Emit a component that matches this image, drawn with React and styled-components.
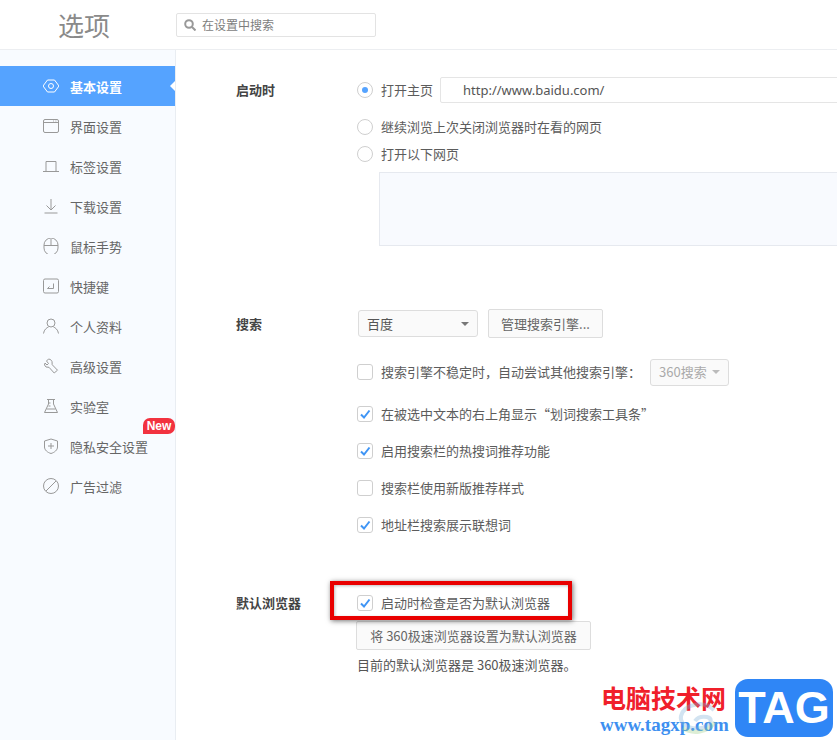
import React from 'react'
import styled, { createGlobalStyle } from 'styled-components'

const GlobalStyle = createGlobalStyle`
  html, body {
    margin: 0;
    height: 100%;
    overflow: hidden;
    background: #fff;
  }
  body {
    font-family: "Noto Sans CJK SC", "Liberation Sans", sans-serif;
    font-size: 13px;
    color: #555;
  }
`

const Page = styled.div`
  position: relative;
  width: 837px;
  height: 740px;
  overflow: hidden;
  display: flex;
  flex-direction: column;
`

const Header = styled.header`
  height: 49px;
  flex: none;
  display: flex;
  align-items: center;
  border-bottom: 1px solid #eceef1;
`

const Title = styled.h1`
  width: 176px;
  margin: 0;
  padding-left: 58px;
  box-sizing: border-box;
  font-size: 26px;
  font-weight: 400;
  color: #8a8a8a;
  line-height: 49px;
`

const SearchBox = styled.div`
  width: 200px;
  height: 24px;
  box-sizing: border-box;
  display: flex;
  align-items: center;
  gap: 6px;
  padding-left: 7px;
  border: 1px solid #e3e3e3;
  border-radius: 2px;
  font-size: 12px;
  color: #7d7d7d;

  svg {
    width: 12px;
    height: 12px;
    fill: none;
    stroke: #999;
    stroke-width: 2;
  }
`

const Body = styled.div`
  flex: 1;
  display: flex;
  min-height: 0;
`

const Sidebar = styled.nav`
  width: 175px;
  flex: none;
  padding-top: 16px;
  background: #f8fbff;
  border-right: 1px solid #e9edf2;
`

const NavItem = styled.div`
  position: relative;
  height: 40px;
  display: flex;
  align-items: center;
  gap: 11px;
  padding-left: 43px;
  color: ${props => (props.$active ? '#fff' : '#666')};
  font-weight: ${props => (props.$active ? 700 : 400)};
  background: ${props => (props.$active ? '#55a3ff' : 'transparent')};

  ${props => props.$active && `
    &::after {
      content: "";
      position: absolute;
      right: 0;
      top: 15px;
      border: 5px solid transparent;
      border-right-color: #fff;
      border-left-width: 0;
    }
  `}
`

const NavIcon = styled.svg`
  width: 16px;
  height: 16px;
  flex: none;
  fill: none;
  stroke: ${props => (props.$active ? '#fff' : '#999')};
  stroke-width: 1;
`

const NewBadge = styled.span`
  position: absolute;
  right: 0;
  top: -8px;
  width: 32px;
  height: 16px;
  background: #f2323f;
  border-radius: 7px 7px 7px 0;
  color: #fff;
  font-family: "Liberation Sans", sans-serif;
  font-size: 12px;
  font-weight: 700;
  line-height: 16px;
  text-align: center;
`

const Main = styled.main`
  flex: 1;
  min-width: 0;
  padding: 27px 0 0 60px;
`

const Section = styled.section`
  display: grid;
  grid-template-columns: 121px 1fr;
  margin-top: ${props => props.$top || 0}px;
`

const Label = styled.div`
  font-weight: 700;
  color: #444;
  line-height: 20px;
  padding-top: ${props => props.$pad || 0}px;
`

const Controls = styled.div`
  display: flex;
  flex-direction: column;
  min-width: 0;
`

const Option = styled.label`
  display: flex;
  align-items: center;
  gap: 8px;
  height: ${props => props.$height || 20}px;
  margin-top: ${props => props.$top || 0}px;
  line-height: 20px;
  color: #5c5c5c;
  white-space: nowrap;
`

const Radio = styled.span`
  width: 16px;
  height: 16px;
  flex: none;
  box-sizing: border-box;
  border: 1px solid #cfcfcf;
  border-radius: 50%;
  display: flex;
  align-items: center;
  justify-content: center;

  &::after {
    content: "";
    width: 6px;
    height: 6px;
    border-radius: 50%;
    background: ${props => (props.$on ? '#55a3ff' : 'transparent')};
  }
`

const CheckBox = styled.span`
  width: 16px;
  height: 16px;
  flex: none;
  box-sizing: border-box;
  border: 1px solid #cfcfcf;
  border-radius: 3px;
  background: #fff;
  display: flex;
  align-items: center;
  justify-content: center;

  svg {
    width: 12px;
    height: 12px;
    fill: none;
    stroke: #3f95f5;
    stroke-width: 2;
  }
`

const UrlInput = styled.div`
  width: 500px;
  height: 26px;
  flex: none;
  box-sizing: border-box;
  margin-left: -1px;
  padding-left: 22px;
  border: 1px solid #e5e5e5;
  border-radius: 2px;
  color: #555;
  font-family: "Noto Sans", sans-serif;
  font-size: 13px;
  line-height: 25px;
`

const PagesBox = styled.div`
  width: 500px;
  height: 74px;
  box-sizing: border-box;
  margin: 8px 0 0 22px;
  background: #f8fafe;
  border: 1px solid #e6e9ef;
`

const SelectRow = styled.div`
  display: flex;
  align-items: center;
  gap: 10px;
  height: 29px;
`

const Select = styled.div`
  width: ${props => props.$width}px;
  height: 27px;
  box-sizing: border-box;
  margin-left: 1px;
  padding: 0 8px;
  display: flex;
  align-items: center;
  justify-content: space-between;
  flex: none;
  background: #fafafa;
  border: 1px solid #ddd;
  border-radius: 3px;
  color: ${props => (props.$disabled ? '#aaa' : '#555')};

  &::after {
    content: "";
    border: 4px solid transparent;
    border-top-color: ${props => (props.$disabled ? '#bbb' : '#777')};
    border-bottom-width: 0;
  }
`

const Button = styled.div`
  height: 29px;
  box-sizing: border-box;
  padding: 0 12px;
  width: ${props => props.$width}px;
  margin-top: ${props => props.$top || 0}px;
  margin-left: ${props => props.$left || 0}px;
  display: flex;
  align-items: center;
  justify-content: center;
  background: #fafafa;
  border: 1px solid #ddd;
  border-radius: 2px;
  color: #666;
  white-space: nowrap;
`

const Note = styled.div`
  margin-top: 5px;
  line-height: 20px;
  color: #555;
`

const Highlight = styled.div`
  position: absolute;
  left: 330px;
  top: 581px;
  width: 242px;
  height: 39px;
  box-sizing: border-box;
  border: 4px solid #e90000;
  box-shadow: 1px 1px 5px rgba(0, 0, 0, 0.55), inset 1px 1px 3px rgba(0, 0, 0, 0.25);
`

const Watermark = styled.div`
  position: absolute;
  right: 4px;
  bottom: 3px;
  display: flex;
  align-items: center;
  gap: 8px;
`

const MarkText = styled.div`
  position: relative;
  width: 127px;
  text-align: center;
`

const MarkName = styled.div`
  color: #f0202a;
  font-size: 25px;
  font-weight: 700;
  line-height: 30px;
  white-space: nowrap;
`

const MarkUrl = styled.div`
  margin-top: 3px;
  color: #3d8ff0;
  font-family: "Liberation Serif", serif;
  font-size: 19px;
  font-weight: 700;
  line-height: 20px;
  white-space: nowrap;
`

const Swirl = styled.svg`
  position: absolute;
  left: 78px;
  top: 18px;
  width: 40px;
  height: 36px;
  fill: none;
  stroke-width: 4;
  opacity: 0.35;
`

const TagLogo = styled.div`
  width: 98px;
  height: 58px;
  background: #2f86f6;
  border-radius: 13px;
  color: #fff;
  font-family: "Liberation Sans", sans-serif;
  font-size: 45px;
  font-weight: 700;
  line-height: 58px;
  text-align: center;
`

const navItems = [
  {
    name: '基本设置',
    active: true,
    icon: (
      <>
        <path d="M4.5 2h7L16 8l-4.500 6h-7L0 8z" />
        <circle cx="8" cy="8" r="2.500" />
      </>
    ),
  },
  {
    name: '界面设置',
    icon: (
      <>
        <rect x="0.500" y="1.500" width="15" height="13" rx="1.500" />
        <path d="M0.500 4.500h15M10 3h.8M12.500 3h.8" />
      </>
    ),
  },
  { name: '标签设置', icon: <path d="M3 13V3.500h10V13M0 13.500h16" /> },
  { name: '下载设置', icon: <path d="M8 1v10.500M3.500 7.500 8 12l4.500-4.500M1.500 15h13" /> },
  {
    name: '鼠标手势',
    icon: (
      <>
        <path d="M1 7a7 7 0 0 1 14 0v3a6 6 0 0 1-14 0z" />
        <path d="M1 7.500h14M8 1v6.500" />
      </>
    ),
  },
  {
    name: '快捷键',
    icon: (
      <>
        <rect x="0.500" y="1" width="15" height="14" rx="1.500" />
        <path d="M10.500 5.500v5h-6M6.500 8.500l-2 2" />
      </>
    ),
  },
  {
    name: '个人资料',
    icon: (
      <>
        <circle cx="8" cy="5" r="4" />
        <path d="M0.500 15.500C1 11.500 4 9.500 5.500 9M15.500 15.500C15 11.500 12 9.500 10.500 9" />
      </>
    ),
  },
  {
    name: '高级设置',
    icon: <path d="M5.500 1 3.500 3l2 2.500L4 7 2 5 1.500 7 3 9l3 .3 5.200 5.700 3.300-2.800-5.300-5.500L9 3.500 7.500 1.500z" />,
  },
  { name: '实验室', icon: <path d="M4 1.500h8M5.500 1.500V6L1.500 14.500h13L10.500 6V1.500M5.500 5h2M5.500 8h2M3.500 11h9" /> },
  {
    name: '隐私安全设置',
    badge: true,
    icon: <path d="M1.500 3 8 1l6.500 2v6c0 3-3 5.500-6.500 6.500C4.500 14.500 1.500 12 1.500 9zM8 5v6M5 8h6" />,
  },
  {
    name: '广告过滤',
    icon: (
      <>
        <circle cx="8" cy="8" r="7.500" />
        <path d="M3 13 13 3" />
      </>
    ),
  },
]

const Check = () => (
  <svg viewBox="0 0 12 12">
    <path d="M2 6.500 5 9.500 10.500 2.500" />
  </svg>
)

const CheckOption = ({ on, top, children }) => (
  <Option $top={top}>
    <CheckBox>{on && <Check />}</CheckBox>
    {children}
  </Option>
)

function App() {
  return (
    <Page>
      <GlobalStyle />
      <Header>
        <Title>选项</Title>
        <SearchBox>
          <svg viewBox="0 0 12 12">
            <circle cx="5" cy="5" r="3.800" />
            <path d="M8 8l3.500 3.500" />
          </svg>
          在设置中搜索
        </SearchBox>
      </Header>
      <Body>
        <Sidebar>
          {navItems.map(item => (
            <NavItem key={item.name} $active={item.active}>
              <NavIcon viewBox="0 0 16 16" $active={item.active}>{item.icon}</NavIcon>
              {item.name}
              {item.badge && <NewBadge>New</NewBadge>}
            </NavItem>
          ))}
        </Sidebar>
        <Main>
          <Section>
            <Label $pad={3}>启动时</Label>
            <Controls>
              <Option $height={26}>
                <Radio $on />
                打开主页
                <UrlInput>http://www.baidu.com/</UrlInput>
              </Option>
              <Option $top={14}>
                <Radio />
                继续浏览上次关闭浏览器时在看的网页
              </Option>
              <Option $top={7}>
                <Radio />
                打开以下网页
              </Option>
              <PagesBox />
            </Controls>
          </Section>

          <Section $top={63}>
            <Label $pad={5}>搜索</Label>
            <Controls>
              <SelectRow>
                <Select $width={120}>百度</Select>
                <Button $width={115}>管理搜索引擎...</Button>
              </SelectRow>
              <CheckOption top={24}>
                搜索引擎不稳定时，自动尝试其他搜索引擎：
                <Select $width={79} $disabled>360搜索</Select>
              </CheckOption>
              <CheckOption on top={22}>在被选中文本的右上角显示“划词搜索工具条”</CheckOption>
              <CheckOption on top={17}>启用搜索栏的热搜词推荐功能</CheckOption>
              <CheckOption top={17}>搜索栏使用新版推荐样式</CheckOption>
              <CheckOption on top={17}>地址栏搜索展示联想词</CheckOption>
            </Controls>
          </Section>

          <Section $top={58}>
            <Label>默认浏览器</Label>
            <Controls>
              <CheckOption on>启动时检查是否为默认浏览器</CheckOption>
              <Button $width={235} $top={8} $left={-1}>将 360极速浏览器设置为默认浏览器</Button>
              <Note>目前的默认浏览器是 360极速浏览器。</Note>
            </Controls>
          </Section>
        </Main>
      </Body>

      <Highlight />

      <Watermark>
        <MarkText>
          <Swirl viewBox="0 0 40 36">
            <path d="M36 10C26 0 6 4 3 16c-2 10 14 16 26 10 5-3 5-8 0-9-6-1-10 1-12 4" stroke="#7fb2d8" />
            <path d="M5 28c8 6 24 6 32-6" stroke="#9fd08a" />
          </Swirl>
          <MarkName>电脑技术网</MarkName>
          <MarkUrl>www.tagxp.com</MarkUrl>
        </MarkText>
        <TagLogo>TAG</TagLogo>
      </Watermark>
    </Page>
  )
}

export default App
